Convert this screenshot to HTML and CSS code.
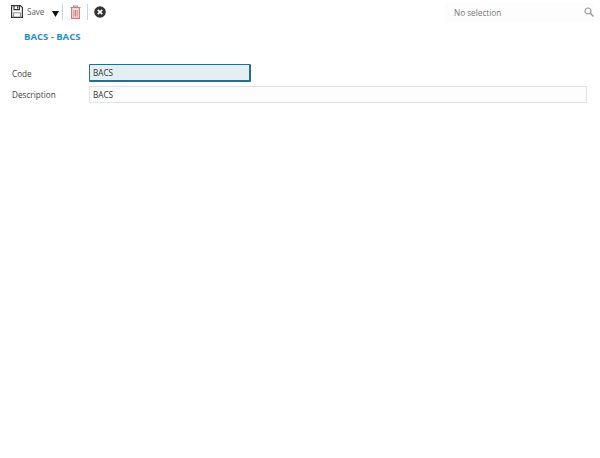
FILE: index.html
```html
<!DOCTYPE html>
<html lang="en">
<head>
<meta charset="utf-8">
<title>BACS - BACS</title>
<link rel="stylesheet" href="styles.css">
</head>
<body>
<header class="toolbar">
  <div class="actions">
    <svg class="icon save-icon" viewBox="0 0 12 13" width="12" height="13"><path d="M.6.6h8.800l2 2v9.800H.6z" fill="none" stroke="#333" stroke-width="1.200"/><path d="M3 .6v4h5.500v-4" fill="none" stroke="#333" stroke-width="1.100"/><rect x="6" y="1.400" width="1.300" height="2.200" fill="#333"/><path d="M2.500 12.400V7.800h7v4.600" fill="none" stroke="#888" stroke-width="1"/></svg>
    <span class="save-label">Save</span>
    <svg class="caret" viewBox="0 0 7 6" width="7" height="6"><path d="M0 0h7L3.500 6z" fill="#111"/></svg>
    <span class="divider"></span>
    <svg class="icon trash-icon" viewBox="0 0 12 14" width="11" height="14" preserveAspectRatio="none"><path d="M4 2V1h4v1M.5 2.500h11" fill="none" stroke="#c9807a" stroke-width="1.200"/><path d="M1.700 3v10.300h8.600V3" fill="#f3dedb" stroke="#c9807a" stroke-width="1.200"/><path d="M4.200 5v6.500M6 5v6.500M7.800 5v6.500" stroke="#c9807a" stroke-width="1"/></svg>
    <span class="divider"></span>
    <svg class="icon close-icon" viewBox="0 0 12 12" width="12" height="12"><circle cx="6" cy="6" r="5.800" fill="#333"/><path d="M3.800 3.800l4.400 4.400M8.200 3.800l-4.400 4.400" stroke="#fff" stroke-width="1.700"/></svg>
  </div>
  <div class="search">
    <span class="search-text">No selection</span>
    <svg class="search-icon" viewBox="0 0 10 10" width="10" height="10"><circle cx="4" cy="4" r="3" fill="none" stroke="#999" stroke-width="1.200"/><path d="M6.300 6.300L9.500 9.500" stroke="#999" stroke-width="1.500"/></svg>
  </div>
</header>
<h1 class="title">BACS - BACS</h1>
<form class="form">
  <div class="row">
    <label class="label" for="code">Code</label>
    <input class="field field-code" id="code" type="text" value="BACS">
  </div>
  <div class="row">
    <label class="label" for="description">Description</label>
    <input class="field field-description" id="description" type="text" value="BACS">
  </div>
</form>
</body>
</html>
```
FILE: styles.css
```css
html, body {
  margin: 0;
  padding: 0;
  background: #fff;
}
body {
  width: 600px;
  height: 458px;
  overflow: hidden;
  font-family: "Open Sans", "Noto Sans", sans-serif;
  font-size: 8.200px;
  color: #444;
}
.toolbar {
  display: flex;
  justify-content: space-between;
  align-items: flex-start;
  height: 24px;
  padding: 0 6px 0 11px;
}
.actions {
  display: flex;
  align-items: center;
  height: 24px;
}
.save-icon {
  margin-right: 4px;
  margin-bottom: 1px;
}
.save-label {
  color: #666;
  width: 25px;
  letter-spacing: -0.1px;
  margin-bottom: 1px;
}
.caret {
  margin-top: 3px;
  margin-right: 3px;
}
.divider {
  width: 1px;
  height: 16px;
  background: #c5d8e9;
}
.trash-icon {
  margin: 0 6px 0 7px;
}
.close-icon {
  margin-left: 6px;
}
.search {
  display: flex;
  align-items: center;
  justify-content: space-between;
  box-sizing: border-box;
  width: 149px;
  height: 20px;
  margin-top: 3px;
  padding: 0 0 2px 9px;
  background: #fdfdfd;
  color: #777;
}
.title {
  margin: 7px 0 0 24px;
  font-size: 9.500px;
  font-weight: 700;
  line-height: 12px;
  color: #1b8fd3;
}
.form {
  display: flex;
  flex-direction: column;
  gap: 3px;
  margin-top: 21px;
  padding: 0 13px 0 12px;
}
.row {
  display: flex;
  align-items: center;
  height: 18px;
}
.label {
  width: 77px;
  color: #444;
}
.field {
  box-sizing: border-box;
  height: 17px;
  padding: 0 3px;
  font: inherit;
  color: #333;
  outline: none;
}
.field-code {
  width: 162px;
  height: 18px;
  background: #e3eff3;
  border: 2px solid #2f6b84;
  border-width: 1px 2px 2px 1px;
  border-radius: 1px;
}
.field-description {
  flex: 1;
  background: #fdfdfd;
  border: 1px solid #e2e2e2;
}
```
